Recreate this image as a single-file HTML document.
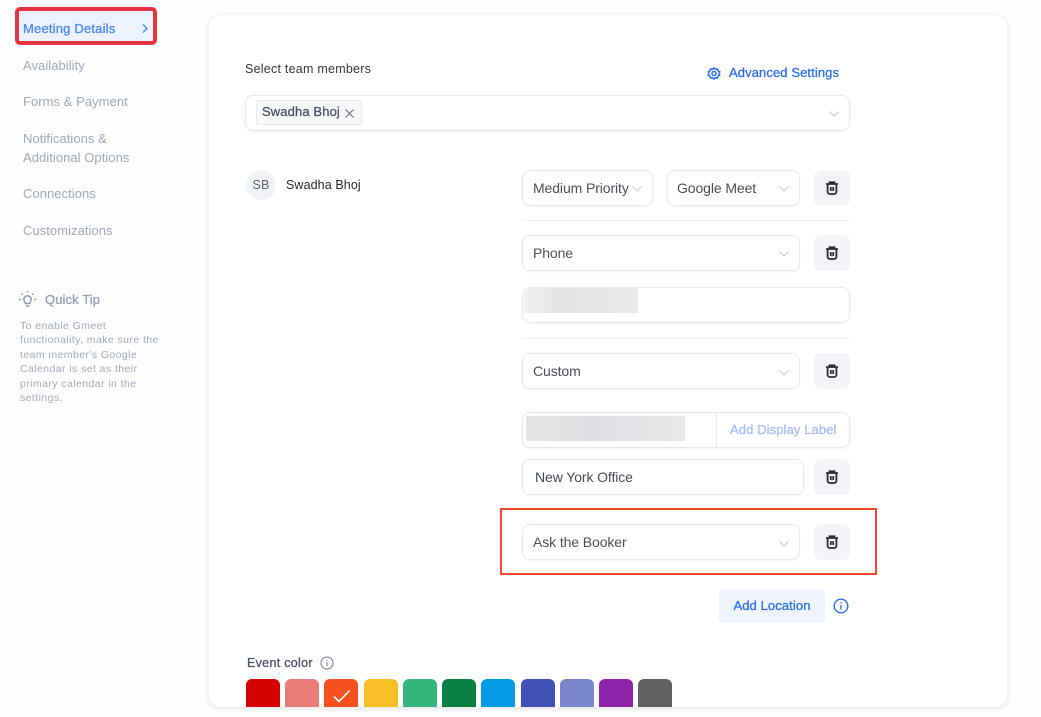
<!DOCTYPE html>
<html><head><meta charset="utf-8"><style>
html,body{margin:0;padding:0;background:#fcfdfd}
#p{position:relative;width:1041px;height:717px;overflow:hidden;background:#fcfdfd;font-family:"Liberation Sans",sans-serif;filter:blur(.3px)}
#p div,#p svg{position:absolute}
.t{white-space:nowrap;line-height:18px;font-size:13.5px;letter-spacing:.2px}
.m{-webkit-text-stroke:.3px currentColor}
.nav{left:23px;color:#a0a7b8;font-size:13px;letter-spacing:.05px}
.box{background:#fff;border:1.5px solid #e8e9ee;border-radius:8px;box-sizing:border-box;box-shadow:0 1px 2px rgba(20,30,60,.05)}
.del{width:36px;height:36px;background:#f3f4f8;border-radius:7px}
.sel{color:#4b4f57;font-size:14px;letter-spacing:-.1px}
.sw{top:679px;height:28px;width:34px;border-radius:6px 6px 0 0}
</style></head><body><div id="p">
<div style="left:209px;top:15px;width:798px;height:692px;background:#fff;border-radius:12px;box-shadow:0 1px 6px rgba(30,50,60,.14)"></div>

<div style="left:15px;top:7px;width:142px;height:38px;box-sizing:border-box;border:4px solid #e53540;border-radius:5px;background:#edf3fe"></div>
<div class="t m" style="left:23px;top:20px;color:#4b87f5;font-size:13px;letter-spacing:.19px">Meeting Details</div>
<svg style="left:140px;top:23px" width="10" height="11" viewBox="0 0 10 11"><path d="M3 1.500L7 5.500L3 9.500" fill="none" stroke="#4b87f5" stroke-width="1.400"/></svg>
<div class="t nav" style="top:57px">Availability</div>
<div class="t nav" style="top:93px">Forms &amp; Payment</div>
<div class="t nav" style="top:130px">Notifications &amp;</div>
<div class="t nav" style="top:149px">Additional Options</div>
<div class="t nav" style="top:185px">Connections</div>
<div class="t nav" style="top:222px">Customizations</div>

<svg style="left:18px;top:290px" width="20" height="20" viewBox="0 0 20 20" fill="none" stroke="#8f97ab" stroke-width="1.500"><path d="M5.800 9.500a3.700 3.700 0 1 1 7.400 0c0 1.600-1.300 2.300-1.600 4H7.400c-.3-1.700-1.600-2.400-1.600-4zM7.800 16h3.400M.8 9.500h2M16.200 9.500h2M9.500 1v1.600M3.500 3.500l1.200 1.200M15.500 3.500l-1.200 1.200"/></svg>
<div class="t m" style="left:45px;top:291px;color:#959db0;font-size:13px;letter-spacing:.1px">Quick Tip</div>
<div class="t" style="left:20px;top:319px;color:#a3aabb;font-size:10.500px;line-height:14.400px;letter-spacing:.42px;white-space:nowrap">To enable Gmeet<br>functionality, make sure the<br>team member's Google<br>Calendar is set as their<br>primary calendar in the<br>settings.</div>

<div class="t" style="left:245px;top:60px;color:#33363d;font-size:12.500px;letter-spacing:.24px">Select team members</div>
<svg style="left:707px;top:66px" width="14" height="15" viewBox="0 0 24 24" fill="none" stroke="#2b6ff0" stroke-width="2.600"><circle cx="12" cy="12" r="3.500"/><path d="M12 2.500l2.500 2.300 3.400-.6 1 3.300 3 1.700-1.300 2.800 1.300 2.800-3 1.700-1 3.300-3.400-.6-2.500 2.300-2.500-2.300-3.400.6-1-3.300-3-1.700 1.300-2.800-1.300-2.800 3-1.700 1-3.300 3.400.6z"/></svg>
<div class="t m" style="left:729px;top:64px;color:#2b6ff0;font-size:13px;letter-spacing:.1px">Advanced Settings</div>

<div class="box" style="left:245px;top:95px;width:605px;height:36px"></div>
<div style="left:256px;top:100px;width:106px;height:25px;box-sizing:border-box;background:#f7f8fa;border:1px solid #e6e8ed;border-radius:2px"></div>
<div class="t m" style="left:262px;top:103px;color:#4a5266;font-size:13px;letter-spacing:.12px">Swadha Bhoj</div>
<svg style="left:344px;top:108px" width="11" height="11" viewBox="0 0 11 11"><path d="M1.500 1.500l8 8M9.500 1.500l-8 8" stroke="#6a7080" stroke-width="1.100"/></svg>
<svg style="left:828px;top:110px" width="12" height="8" viewBox="0 0 12 8"><path d="M1.500 1.500L6 6l4.500-4.500" fill="none" stroke="#c8cad0" stroke-width="1.100"/></svg>

<div style="left:246px;top:170px;width:30px;height:30px;border-radius:50%;background:#f1f3f7"></div>
<div class="t" style="left:246px;top:176px;width:30px;text-align:center;color:#5d6579;font-size:12.500px;letter-spacing:.2px">SB</div>
<div class="t" style="left:286px;top:176px;color:#26282e;font-size:12.500px;letter-spacing:.1px">Swadha Bhoj</div>

<div class="box" style="left:522px;top:170px;width:131px;height:36px"></div>
<div class="t sel" style="left:533px;top:179px">Medium Priority</div>
<svg style="left:631px;top:185px" width="12" height="8" viewBox="0 0 12 8"><path d="M1.500 1.500L6 6l4.500-4.500" fill="none" stroke="#c8cad0" stroke-width="1.100"/></svg>
<div class="box" style="left:667px;top:170px;width:133px;height:36px"></div>
<div class="t sel" style="left:677px;top:179px">Google Meet</div>
<svg style="left:778px;top:185px" width="12" height="8" viewBox="0 0 12 8"><path d="M1.500 1.500L6 6l4.500-4.500" fill="none" stroke="#c8cad0" stroke-width="1.100"/></svg>
<div class="del" style="left:814px;top:170px"></div>
<svg style="left:825px;top:181px" width="14" height="14" viewBox="0 0 14 14" fill="none" stroke="#2c2f36" stroke-width="1.800"><path d="M1 3h12M4.500 3V1.300h5V3M2.600 3v7.800a2.200 2.200 0 0 0 2.200 2.200h4.400a2.200 2.200 0 0 0 2.200-2.200V3M5.800 6v4M8.200 6v4"/></svg>
<div style="left:522px;top:220px;width:328px;height:1px;background:#eceef2"></div>

<div class="box" style="left:522px;top:235px;width:278px;height:36px"></div>
<div class="t sel" style="left:533px;top:244px">Phone</div>
<svg style="left:778px;top:250px" width="12" height="8" viewBox="0 0 12 8"><path d="M1.500 1.500L6 6l4.500-4.500" fill="none" stroke="#c8cad0" stroke-width="1.100"/></svg>
<div class="del" style="left:814px;top:235px"></div>
<svg style="left:825px;top:246px" width="14" height="14" viewBox="0 0 14 14" fill="none" stroke="#2c2f36" stroke-width="1.800"><path d="M1 3h12M4.500 3V1.300h5V3M2.600 3v7.800a2.200 2.200 0 0 0 2.200 2.200h4.400a2.200 2.200 0 0 0 2.200-2.200V3M5.800 6v4M8.200 6v4"/></svg>

<div class="box" style="left:522px;top:287px;width:328px;height:36px"></div>
<div style="left:524px;top:288px;width:114px;height:25px;background:linear-gradient(90deg,#f0f1f2,#e3e4e6 30%,#e6e7e9 70%,#eaebec)"></div>
<div style="left:522px;top:338px;width:328px;height:1px;background:#eceef2"></div>

<div class="box" style="left:522px;top:353px;width:278px;height:36px"></div>
<div class="t sel" style="left:533px;top:362px">Custom</div>
<svg style="left:778px;top:369px" width="12" height="8" viewBox="0 0 12 8"><path d="M1.500 1.500L6 6l4.500-4.500" fill="none" stroke="#c8cad0" stroke-width="1.100"/></svg>
<div class="del" style="left:814px;top:353px"></div>
<svg style="left:825px;top:364px" width="14" height="14" viewBox="0 0 14 14" fill="none" stroke="#2c2f36" stroke-width="1.800"><path d="M1 3h12M4.500 3V1.300h5V3M2.600 3v7.800a2.200 2.200 0 0 0 2.200 2.200h4.400a2.200 2.200 0 0 0 2.200-2.200V3M5.800 6v4M8.200 6v4"/></svg>

<div class="box" style="left:522px;top:412px;width:328px;height:36px"></div>
<div style="left:526px;top:416px;width:159px;height:25px;background:linear-gradient(90deg,#e4e5e7,#dfe0e3 40%,#e4e5e8 75%,#e8e9ea)"></div>
<div style="left:716px;top:413px;width:1px;height:34px;background:#e6e8ee"></div>
<div class="t m" style="left:730px;top:421px;color:#a4bcf8;font-size:13px;letter-spacing:.1px">Add Display Label</div>

<div class="box" style="left:522px;top:459px;width:282px;height:36px"></div>
<div class="t sel" style="left:535px;top:468px;color:#434a5a">New York Office</div>
<div class="del" style="left:814px;top:459px"></div>
<svg style="left:825px;top:470px" width="14" height="14" viewBox="0 0 14 14" fill="none" stroke="#2c2f36" stroke-width="1.800"><path d="M1 3h12M4.500 3V1.300h5V3M2.600 3v7.800a2.200 2.200 0 0 0 2.200 2.200h4.400a2.200 2.200 0 0 0 2.200-2.200V3M5.800 6v4M8.200 6v4"/></svg>

<div style="left:500px;top:508px;width:377px;height:67px;box-sizing:border-box;border:2px solid #f2472a"></div>
<div class="box" style="left:522px;top:524px;width:278px;height:36px"></div>
<div class="t sel" style="left:533px;top:533px">Ask the Booker</div>
<svg style="left:778px;top:540px" width="12" height="8" viewBox="0 0 12 8"><path d="M1.500 1.500L6 6l4.500-4.500" fill="none" stroke="#c8cad0" stroke-width="1.100"/></svg>
<div class="del" style="left:814px;top:524px"></div>
<svg style="left:825px;top:535px" width="14" height="14" viewBox="0 0 14 14" fill="none" stroke="#2c2f36" stroke-width="1.800"><path d="M1 3h12M4.500 3V1.300h5V3M2.600 3v7.800a2.200 2.200 0 0 0 2.200 2.200h4.400a2.200 2.200 0 0 0 2.200-2.200V3M5.800 6v4M8.200 6v4"/></svg>

<div style="left:719px;top:589px;width:106px;height:34px;background:#eff4fe;border-radius:4px"></div>
<div class="t m" style="left:719px;top:597px;width:106px;text-align:center;color:#2b6ff0;font-size:13px;letter-spacing:.1px">Add Location</div>
<svg style="left:833px;top:598px" width="16" height="16" viewBox="0 0 16 16" fill="none" stroke="#2b6ff0" stroke-width="1.400"><circle cx="8" cy="8" r="6.800"/><path d="M8 7v4.500M8 4.200v1.400"/></svg>

<div class="t m" style="left:247px;top:654px;color:#4b5365;font-size:12.500px;letter-spacing:.3px">Event color</div>
<svg style="left:320px;top:656px" width="14" height="14" viewBox="0 0 14 14" fill="none" stroke="#6f7689" stroke-width="1"><circle cx="7" cy="7" r="6"/><path d="M7 6.200v4M7 3.600v1.200"/></svg>
<div class="sw" style="left:246px;background:#d50000"></div>
<div class="sw" style="left:285px;background:#e67c73"></div>
<div class="sw" style="left:324px;background:#f4511e"></div>
<svg style="left:332px;top:688px" width="20" height="16" viewBox="0 0 20 16"><path d="M2 8.500L7 13.500 17.500 2.500" fill="none" stroke="#fff" stroke-width="1.600"/></svg>
<div class="sw" style="left:364px;background:#f6bf26"></div>
<div class="sw" style="left:403px;background:#33b679"></div>
<div class="sw" style="left:442px;background:#0b8043"></div>
<div class="sw" style="left:481px;background:#039be5"></div>
<div class="sw" style="left:521px;background:#3f51b5"></div>
<div class="sw" style="left:560px;background:#7986cb"></div>
<div class="sw" style="left:599px;background:#8e24aa"></div>
<div class="sw" style="left:638px;background:#616161"></div>
</div></body></html>
